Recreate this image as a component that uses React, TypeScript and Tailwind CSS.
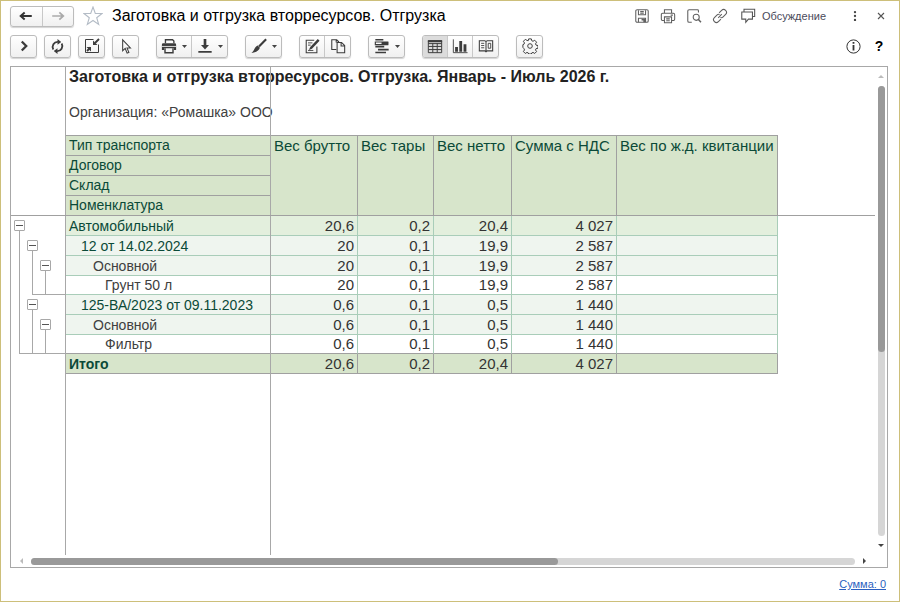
import React from "react";

type Level = 1 | 2 | 3 | 4 | 5;
type Row = { name: string; level: Level; values: string[]; tree: string };

// tree: one letter per gutter column: b = collapse box, l = line, . = empty
const rows: Row[] = [
  { name: "Автомобильный", level: 1, values: ["20,6", "0,2", "20,4", "4 027", ""], tree: "b.." },
  { name: "12 от 14.02.2024", level: 2, values: ["20", "0,1", "19,9", "2 587", ""], tree: "lb." },
  { name: "Основной", level: 3, values: ["20", "0,1", "19,9", "2 587", ""], tree: "llb" },
  { name: "Грунт 50 л", level: 4, values: ["20", "0,1", "19,9", "2 587", ""], tree: "lll" },
  { name: "125-ВА/2023 от 09.11.2023", level: 2, values: ["0,6", "0,1", "0,5", "1 440", ""], tree: "lb." },
  { name: "Основной", level: 3, values: ["0,6", "0,1", "0,5", "1 440", ""], tree: "llb" },
  { name: "Фильтр", level: 4, values: ["0,6", "0,1", "0,5", "1 440", ""], tree: "lll" },
  { name: "Итого", level: 5, values: ["20,6", "0,2", "20,4", "4 027", ""], tree: "" },
];

const rowStyle: Record<Level, string> = {
  1: "h-[20px] bg-[#e3efdd]",
  2: "h-[20px] bg-[#eff5ef]",
  3: "h-[20px] bg-[#eff5ef]",
  4: "h-[19px] bg-white",
  5: "h-[20px] bg-[#d7e5cb]",
};

const nameStyle: Record<Level, string> = {
  1: "pl-[3px] text-[#0b4a38]",
  2: "pl-[15px] text-[#0b4a38]",
  3: "pl-[27px] text-[#404040]",
  4: "pl-[39px] text-[#404040]",
  5: "pl-[3px] font-bold text-[#0b4a38]",
};

const measures = ["Вес брутто", "Вес тары", "Вес нетто", "Сумма с НДС", "Вес по ж.д. квитанции"];

function Svg({ size = 18, className = "", children }: { size?: number; className?: string; children: React.ReactNode }) {
  return (
    <svg width={size} height={size} viewBox="0 0 18 18" fill="none" stroke="currentColor" strokeWidth="1.2" className={"shrink-0 " + className} aria-hidden="true">
      {children}
    </svg>
  );
}

function Caret() {
  return (
    <svg width="5" height="3" viewBox="0 0 5 3" className="shrink-0" aria-hidden="true">
      <path d="M0 0h5L2.5 3z" fill="#444" />
    </svg>
  );
}

function Group({ children }: { children: React.ReactNode }) {
  return (
    <div className="flex h-[23px] divide-x divide-[#c8c8c8] overflow-hidden rounded-[3px] border border-[#bcbcbc] bg-linear-to-b from-white to-[#f0f0f0] shadow-[0_1px_1px_#d4d4d4]">
      {children}
    </div>
  );
}

function Tool({ label, menu, active, children }: { label: string; menu?: boolean; active?: boolean; children: React.ReactNode }) {
  return (
    <button
      type="button"
      aria-label={label}
      aria-pressed={active}
      className={
        "flex items-center justify-center text-[#3c3c3c] " +
        (menu ? "w-[35px] gap-[5px] " : "w-[25px] ") +
        (active ? "bg-[#dcdcdc]" : "")
      }
    >
      {children}
      {menu && <Caret />}
    </button>
  );
}

function HeadButton({ label, children }: { label: string; children: React.ReactNode }) {
  return (
    <button type="button" aria-label={label} className="flex h-[20px] w-[18px] items-center justify-center text-[#606060]">
      {children}
    </button>
  );
}

function TitleBar() {
  return (
    <header className="flex h-[22px] items-center">
      <div className="flex h-[21px] w-[64px] divide-x divide-[#c8c8c8] rounded-[3px] border border-[#bcbcbc] bg-linear-to-b from-white to-[#f0f0f0] shadow-[0_1px_1px_#d4d4d4]">
        <button type="button" aria-label="Назад" className="flex flex-1 items-center justify-center text-[#333]">
          <Svg size={16}><path d="M3 9h12.5M7.500 5L3 9l4.500 4" strokeWidth="2.200" /></Svg>
        </button>
        <button type="button" aria-label="Вперед" className="flex flex-1 items-center justify-center text-[#aaa]">
          <Svg size={16}><path d="M2.500 9h12.500M10.500 5L15 9l-4.500 4" strokeWidth="1.900" /></Svg>
        </button>
      </div>
      <button type="button" aria-label="В избранное" className="ml-[9px] text-[#b4bcc6]">
        <svg width="20" height="20" viewBox="0 0 20 20" fill="none" stroke="currentColor" strokeWidth="1.1" aria-hidden="true">
          <path d="M10 1l2.300 6.500h6.700l-5.300 4.200 2 6.800L10 14.500l-5.700 4 2-6.800L1 7.500h6.700z" />
        </svg>
      </button>
      <h1 className="ml-[9px] text-[16px] leading-[20px] whitespace-nowrap text-black">Заготовка и отгрузка вторресурсов. Отгрузка</h1>
      <div className="ml-auto flex items-center gap-[8px]">
        <HeadButton label="Сохранить">
          <Svg size={16}><rect x="2" y="2" width="14" height="14" rx="1.500" /><path d="M5 2.500v5h8v-5M7 4h4M7 5.800h4M5 16v-4.500h8V16" /><path d="M8.500 12h4v4h-2v-2h-2z" fill="currentColor" stroke="none" /></Svg>
        </HeadButton>
        <HeadButton label="Печать">
          <Svg size={16}><path d="M5 6V2h8v4M4.500 14H3a1.500 1.500 0 0 1-1.500-1.500v-5A1.500 1.500 0 0 1 3 6h12a1.500 1.500 0 0 1 1.500 1.500v5A1.500 1.500 0 0 1 15 14h-1.500M5 10h8v6.500H5zM7 12.200h4M7 14.400h4M12 8h2.500" /></Svg>
        </HeadButton>
        <HeadButton label="Просмотр">
          <Svg size={16}><path d="M6.500 16H3.500A1.500 1.500 0 0 1 2 14.500v-11A1.500 1.500 0 0 1 3.500 2h9.500a1 1 0 0 1 1 1v2" /><circle cx="11.500" cy="10.500" r="3.400" /><path d="M14 13l2.800 3" strokeWidth="1.700" /></Svg>
        </HeadButton>
        <HeadButton label="Ссылка">
          <Svg size={16}><path d="M7 11l4-4M8 5.500l2.800-2.800a3.100 3.100 0 0 1 4.500 4.500L12.500 10a3 3 0 0 1-3 .8M10 12.500l-2.800 2.800a3.100 3.100 0 0 1-4.500-4.500L5.500 8a3 3 0 0 1 3-.8" /></Svg>
        </HeadButton>
        <button type="button" className="ml-[3px] flex items-center gap-[6px] text-[11px] leading-[16px] text-[#4a4a5a]">
          <Svg size={16} className="text-[#555]"><path d="M4.500 4V1.500h12v8h-2.200M2 4.500h12v8H9.500L6.500 16v-3.500H2z" /></Svg>
          Обсуждение
        </button>
        <button type="button" aria-label="Меню" className="ml-[12px] flex h-[20px] w-[18px] items-center justify-center text-[#444]">
          <Svg size={14}><g fill="currentColor" stroke="none"><circle cx="9" cy="4" r="1.500" /><circle cx="9" cy="9" r="1.500" /><circle cx="9" cy="14" r="1.500" /></g></Svg>
        </button>
        <button type="button" aria-label="Закрыть" className="-mr-[2px] flex h-[20px] w-[18px] items-center justify-center text-[#555]">
          <Svg size={12}><path d="M4.500 4.500l9 9M13.500 4.500l-9 9" strokeWidth="1.700" /></Svg>
        </button>
      </div>
    </header>
  );
}

function Toolbar() {
  return (
    <div className="mt-[7px] flex h-[24px] items-center gap-[17px]" role="toolbar" aria-label="Команды отчета">
      <div className="flex gap-[7px]">
        <Group><Tool label="Сформировать"><Svg size={16}><path d="M6.500 4l5 5-5 5" strokeWidth="2.600" /></Svg></Tool></Group>
        <Group>
          <Tool label="Обновить">
            <Svg size={15}><path d="M4 12.500A6 6 0 0 1 9.500 3.500M14 5.500A6 6 0 0 1 8.500 14.500" strokeWidth="2.200" /><path d="M9 0l4.500 3.500L9 7zM9 18l-4.500-3.500L9 11z" fill="currentColor" stroke="none" /></Svg>
          </Tool>
        </Group>
        <Group>
          <Tool label="Свернуть группы">
            <Svg size={18}><path d="M10.500 2.500h-8v13h13v-8" strokeWidth="1" /><path d="M16 2L12 6M4 14l3.500-3.500" strokeWidth="1.900" /><path d="M10 3.500V8h4.500zM3.500 10H8v4.500z" fill="currentColor" stroke="none" /></Svg>
          </Tool>
        </Group>
        <Group><Tool label="Выделение"><Svg size={17}><path d="M6 2v11.500l2.700-2.400 2 4.900 1.900-.8-2-4.700h3.600z" strokeWidth="1.100" /></Svg></Tool></Group>
      </div>
      <Group>
        <Tool label="Печать" menu>
          <Svg size={16}><path d="M5 6V2h8l1.500 1.500V6" strokeWidth="1.500" /><path d="M2.500 6h13A1.500 1.500 0 0 1 17 7.500V13.500h-2.500v-2h-11v2H1V7.500A1.500 1.500 0 0 1 2.500 6z" fill="currentColor" stroke="none" /><path d="M4.500 11.500v5h9v-5" strokeWidth="1.600" /><path d="M1 9.500h16" stroke="white" strokeWidth=".9" /></Svg>
        </Tool>
        <Tool label="Сохранить" menu>
          <Svg size={16}><path d="M9 1v8" strokeWidth="3" /><path d="M4.500 8h9L9 13z" fill="currentColor" stroke="none" /><path d="M1.500 15.500h15" strokeWidth="2" /></Svg>
        </Tool>
      </Group>
      <Group>
        <Tool label="Оформление" menu>
          <Svg size={16}><path d="M17 1.500L9 9.500" strokeWidth="2.400" /><path d="M7.500 8.500l2.500 2.500c-.8 3-4 5.200-9.500 6 2.800-2 3.300-7 7-8.500z" fill="currentColor" stroke="none" /></Svg>
        </Tool>
      </Group>
      <Group>
        <Tool label="Редактировать">
          <Svg size={16}><path d="M14.500 9.500v7H2.500V2.500h9" strokeWidth="1.200" /><path d="M15.500 1l2 2-8.500 9-3.500 1.500L7 10z" fill="currentColor" stroke="none" /><path d="M4.500 5.500h5M4.500 8h3M4.500 14h6" strokeWidth="1" /></Svg>
        </Tool>
        <Tool label="Копировать">
          <Svg size={16}><path d="M7 13H2V2h5.500L10 4.500M8 5h5l3.500 3.500V16.500H8zM12.500 5.500V9h3.500M7 2.500V5" /></Svg>
        </Tool>
      </Group>
      <Group>
        <Tool label="Структура" menu>
          <Svg size={16}><path d="M1.500 2h9M1.500 9.800h10M4.500 13h12M1.500 16.300h12" strokeWidth="1.900" /><path d="M1.500 4.500h14v3h-14z" strokeWidth="1.300" /><path d="M8.500 4.500h7.500v3H8.500z" fill="currentColor" stroke="none" /></Svg>
        </Tool>
      </Group>
      <Group>
        <Tool label="Таблица" active>
          <Svg size={16}><path d="M1.500 3h15v13.500h-15zM1.500 9.500h15M1.500 13h15M1.500 6.300h15M6.500 6v10.500M11.500 6v10.500" strokeWidth="1.100" /><path d="M1 2.500h16v2.200H1z" fill="currentColor" stroke="none" /></Svg>
        </Tool>
        <Tool label="Диаграмма">
          <Svg size={16}><path d="M1.500 1.500v15H17.500" strokeWidth="1" /><path d="M3.500 10h3.200v5.500H3.500zM8.200 3.500h3.200v12H8.200zM13 7h3.200v8.500H13z" fill="currentColor" stroke="none" /></Svg>
        </Tool>
        <Tool label="Таблица и диаграмма">
          <Svg size={16}><path d="M1.500 3h6L9 4l1.500-1h6v11.500h-6l-1.500 1-1.500-1h-6zM9 4v11.500" strokeWidth="1.200" /><path d="M3.500 6H7M3.500 8.500H7M3.500 11H7M11.500 6h2.800v5.500h-2.800z" strokeWidth="1" /></Svg>
        </Tool>
      </Group>
      <Group>
        <Tool label="Настройки">
          <Svg size={16}>
            <circle cx="9" cy="9" r="2.600" strokeWidth="1.100" />
            <path d="M7.500 1h3l.5 2.100 1.400.6 1.900-1.200 2.100 2.200-1.200 1.900.6 1.400 2.200.5v3l-2.200.5-.6 1.400 1.200 1.900-2.100 2.100-1.900-1.200-1.400.6-.5 1.200h-3L7 16.800l-1.400-.6-1.900 1.200-2.100-2.100 1.200-1.900-.6-1.400L1 10.500v-3L2.200 7l.6-1.400-1.200-1.900 2.100-2.200 1.900 1.200L7 3.100z" strokeWidth="1.100" strokeLinejoin="round" />
          </Svg>
        </Tool>
      </Group>
      <div className="ml-auto flex items-center gap-[9px]">
        <button type="button" aria-label="Информация" className="text-[#333]">
          <svg width="15" height="15" viewBox="0 0 15 15" fill="none" stroke="currentColor" aria-hidden="true"><circle cx="7.500" cy="7.500" r="6.600" /><path d="M7.500 6v5.500M7.500 3v1.800" strokeWidth="1.800" /></svg>
        </button>
        <button type="button" className="w-[18px] text-[14px] leading-[20px] font-bold text-black">?</button>
      </div>
    </div>
  );
}

function TreeCell({ kind }: { kind: string }) {
  if (kind === "b") {
    return (
      <div className="flex w-[13px] flex-col items-center">
        <button type="button" aria-label="Свернуть" className="mt-[4px] flex h-[11px] w-[11px] shrink-0 items-center justify-center rounded-[1px] border border-[#a8a8a8] bg-white">
          <span className="h-px w-[7px] bg-[#555]" />
        </button>
        <span className="w-px flex-1 bg-[#a8a8a8]" />
      </div>
    );
  }
  return <div className="flex w-[13px] justify-center">{kind === "l" && <span className="w-px bg-[#a8a8a8]" />}</div>;
}

function Gutter() {
  return (
    <div className="w-[55px] shrink-0 border-r border-[#a8a8a8] pt-[149px]">
      {rows.map((row, i) => (
        <div key={i} className={"relative flex pl-[2px] " + (row.level === 4 ? "h-[19px]" : "h-[20px]")}>
          {row.tree.split("").map((kind, k) => <TreeCell key={k} kind={kind} />)}
          {row.name === "Грунт 50 л" && <span className="absolute right-0 bottom-0 left-[21px] h-px bg-[#a8a8a8]" />}
          {row.name === "Фильтр" && <span className="absolute right-0 bottom-0 left-[8px] h-px bg-[#a8a8a8]" />}
        </div>
      ))}
    </div>
  );
}

function Report() {
  const head = "border-r border-b border-[#a0a0a0] px-[3px] py-0 text-left align-top font-normal ";
  return (
    <table className="mt-[13px] w-[712px] table-fixed border-separate border-spacing-0 border-t border-[#a0a0a0] text-[14px] leading-[18px] whitespace-nowrap">
      <colgroup>
        <col className="w-[205px]" />
        <col className="w-[87px]" />
        <col className="w-[76px]" />
        <col className="w-[78px]" />
        <col className="w-[105px]" />
        <col className="w-[161px]" />
      </colgroup>
      <thead className="bg-[#d7e5cb] leading-[19px] text-[#0b4a38]">
        <tr className="h-[20px]">
          <th className={head}>Тип транспорта</th>
          {measures.map((m) => <th key={m} rowSpan={4} className={head + "text-[15px]"}>{m}</th>)}
        </tr>
        <tr className="h-[20px]"><th className={head}>Договор</th></tr>
        <tr className="h-[20px]"><th className={head}>Склад</th></tr>
        <tr className="h-[20px]"><th className={head}>Номенклатура</th></tr>
      </thead>
      <tbody>
        {rows.map((row, i) => {
          const gray = row.level === 5 || row.name === "Фильтр";
          const line = gray ? "border-b-[#a0a0a0] " : "border-b-[#a9cdb9] ";
          const side = row.level === 5 ? "border-r-[#a0a0a0] " : "border-r-[#a9cdb9] ";
          return (
            <tr key={i} className={rowStyle[row.level]}>
              <th scope="row" className={"border-r border-b p-0 text-left " + line + side + (row.level === 5 ? "" : "font-normal ") + nameStyle[row.level]}>{row.name}</th>
              {row.values.map((v, k) => (
                <td key={k} className={"border-r border-b p-0 pr-[3px] text-right text-[15px] text-[#333] " + line + side}>{v}</td>
              ))}
            </tr>
          );
        })}
      </tbody>
    </table>
  );
}

function Arrow({ d, color }: { d: string; color: string }) {
  return <svg width="6" height="6" viewBox="0 0 6 6" className="shrink-0" aria-hidden="true"><path d={d} fill={color} /></svg>;
}

export default function App() {
  return (
    <div className="flex h-screen flex-col border border-[#cdbf7a] bg-white pt-[4px] pr-[11px] pl-[9px] font-['Liberation_Sans',Arial,sans-serif]">
      <TitleBar />
      <Toolbar />
      <main className="mt-[8px] flex min-h-0 flex-1 flex-col border border-[#a8a8a8]">
        <div className="flex min-h-0 flex-1">
          <div className="relative flex min-w-0 flex-1 overflow-hidden">
            <Gutter />
            <div className="relative flex-1">
              <h2 className="pl-[3px] text-[16px] leading-[20px] font-bold whitespace-nowrap text-[#222]">Заготовка и отгрузка вторресурсов. Отгрузка. Январь - Июль 2026 г.</h2>
              <p className="mt-[15px] pl-[3px] text-[14px] leading-[20px] whitespace-nowrap text-[#404040]">Организация: «Ромашка» ООО</p>
              <Report />
              <span className="absolute inset-y-0 left-[204px] w-px bg-[#a8a8a8]" />
            </div>
            <span className="absolute inset-x-0 top-[148px] h-px bg-[#a0a0a0]" />
          </div>
          <div className="flex w-[12px] flex-col items-center py-[6px]">
            <Arrow d="M0 5h6L3 2z" color="#bbb" />
            <div className="my-[7px] w-[7px] flex-1 rounded-full bg-[#d6d6d6]"><div className="h-[59%] rounded-full bg-[#999]" /></div>
            <Arrow d="M0 1h6L3 4z" color="#444" />
          </div>
        </div>
        <div className="flex h-[12px] items-center pr-[19px] pl-[7px]">
          <Arrow d="M5 0v6L2 3z" color="#bbb" />
          <div className="mx-[7px] h-[7px] flex-1 rounded-full bg-[#d6d6d6]"><div className="h-[7px] w-[64%] rounded-full bg-[#999]" /></div>
          <Arrow d="M1 0v6L4 3z" color="#444" />
        </div>
      </main>
      <footer className="flex h-[33px] items-center justify-end pr-[2px] text-[11px]">
        <a href="#sum" className="text-[#2a5fc0] underline">Сумма: 0</a>
      </footer>
    </div>
  );
}
